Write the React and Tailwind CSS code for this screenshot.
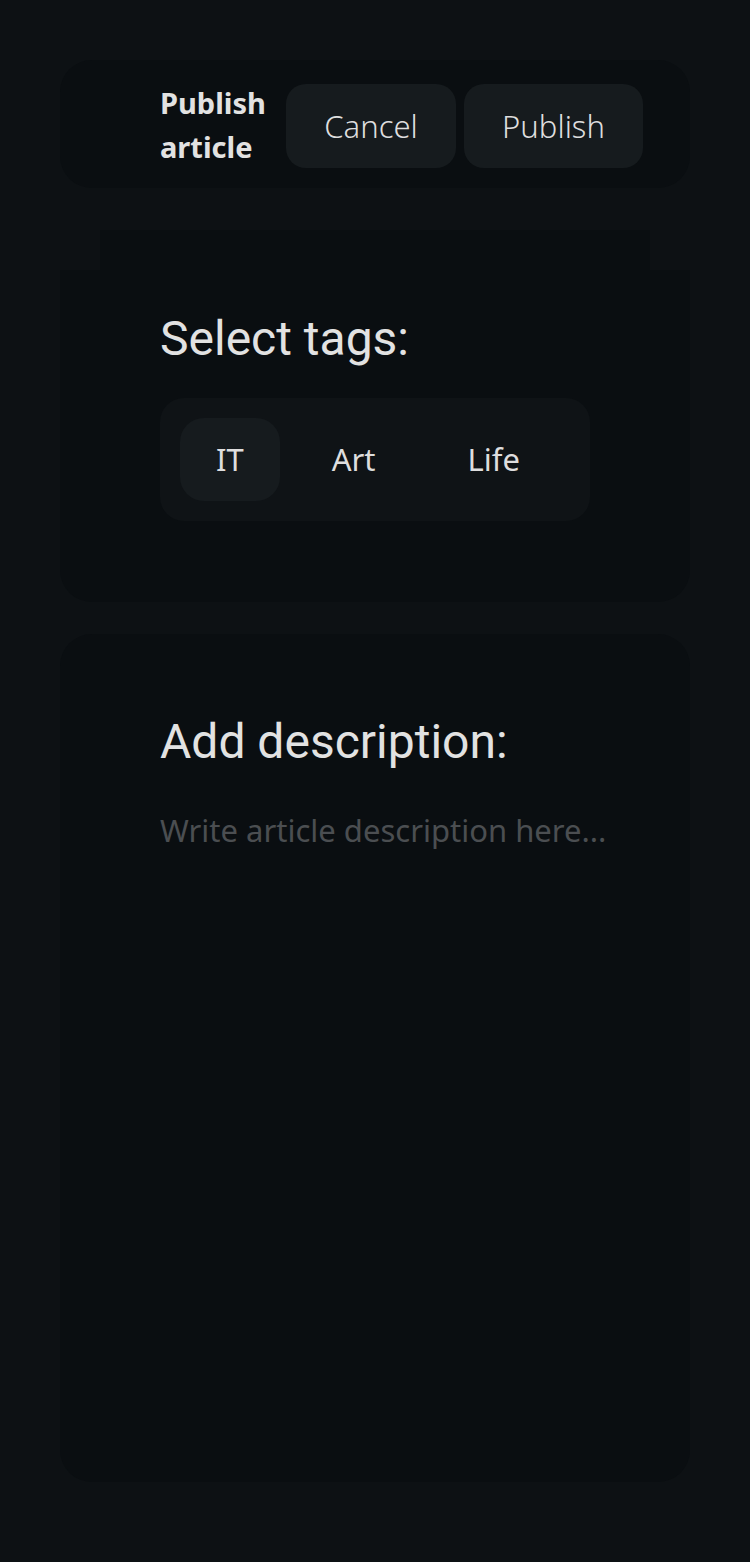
import React, { useState } from 'react';

const body = { fontFamily: '"Noto Sans", "Open Sans", sans-serif' };
const head = { fontFamily: 'Roboto, "Noto Sans", sans-serif' };

const tags = ['IT', 'Art', 'Life'];

export default function App() {
  const [active, setActive] = useState('IT');
  const [desc, setDesc] = useState('');

  return (
    <div className="min-h-[1562px] bg-[#0d1114] px-[60px] pt-[60px]" style={body}>
      {/* header */}
      <header className="h-[128px] rounded-[32px] bg-[#0a0e11] flex items-center pl-[100px] pr-[47px] pt-1">
        <h1 className="w-[120px] -mt-[2px] text-[29px] font-bold leading-[44px] text-[#e2e2e2]">
          Publish article
        </h1>
        <div className="ml-auto flex gap-2">
          <button className="w-[170px] h-[84px] rounded-[20px] bg-[#161b1e] text-[31px] font-light text-[#dedede]">
            Cancel
          </button>
          <button className="w-[179px] h-[84px] rounded-[20px] bg-[#161b1e] text-[31px] font-light text-[#dedede]">
            Publish
          </button>
        </div>
      </header>

      {/* tags */}
      <section className="mt-[42px]">
        <div className="mx-10 h-10 bg-[#0a0e11]" />
        <div className="rounded-b-[32px] bg-[#0a0e11] pl-[100px] pt-[41px] pb-[81px]">
          <h2 className="text-[48px] leading-[56px] text-[#e2e2e2]" style={head}>
            Select tags:
          </h2>
          <div className="mt-[31px] w-[430px] rounded-[24px] bg-[#0f1316] p-5 flex gap-4">
            {tags.map((t) => (
              <button
                key={t}
                onClick={() => setActive(t)}
                className={`h-[83px] px-9 rounded-[24px] text-[31px] text-[#dedede] ${
                  active === t ? 'bg-[#161b1e]' : 'bg-transparent'
                } ${t === 'Life' ? 'ml-[4px]' : ''}`}
              >
                {t}
              </button>
            ))}
          </div>
        </div>
      </section>

      {/* description */}
      <section className="mt-[32px] h-[848px] rounded-[32px] bg-[#0a0e11] pl-[100px] pr-[40px] pt-[80px] flex flex-col">
        <h2 className="text-[48px] leading-[56px] text-[#e2e2e2]" style={head}>
          Add description:
        </h2>
        <textarea
          value={desc}
          onChange={(e) => setDesc(e.target.value)}
          placeholder="Write article description here..."
          className="mt-[38px] flex-1 resize-none bg-transparent outline-none text-[31px] leading-[44px] text-[#dedede] placeholder:text-[#4b4e51]"
        />
      </section>
    </div>
  );
}
